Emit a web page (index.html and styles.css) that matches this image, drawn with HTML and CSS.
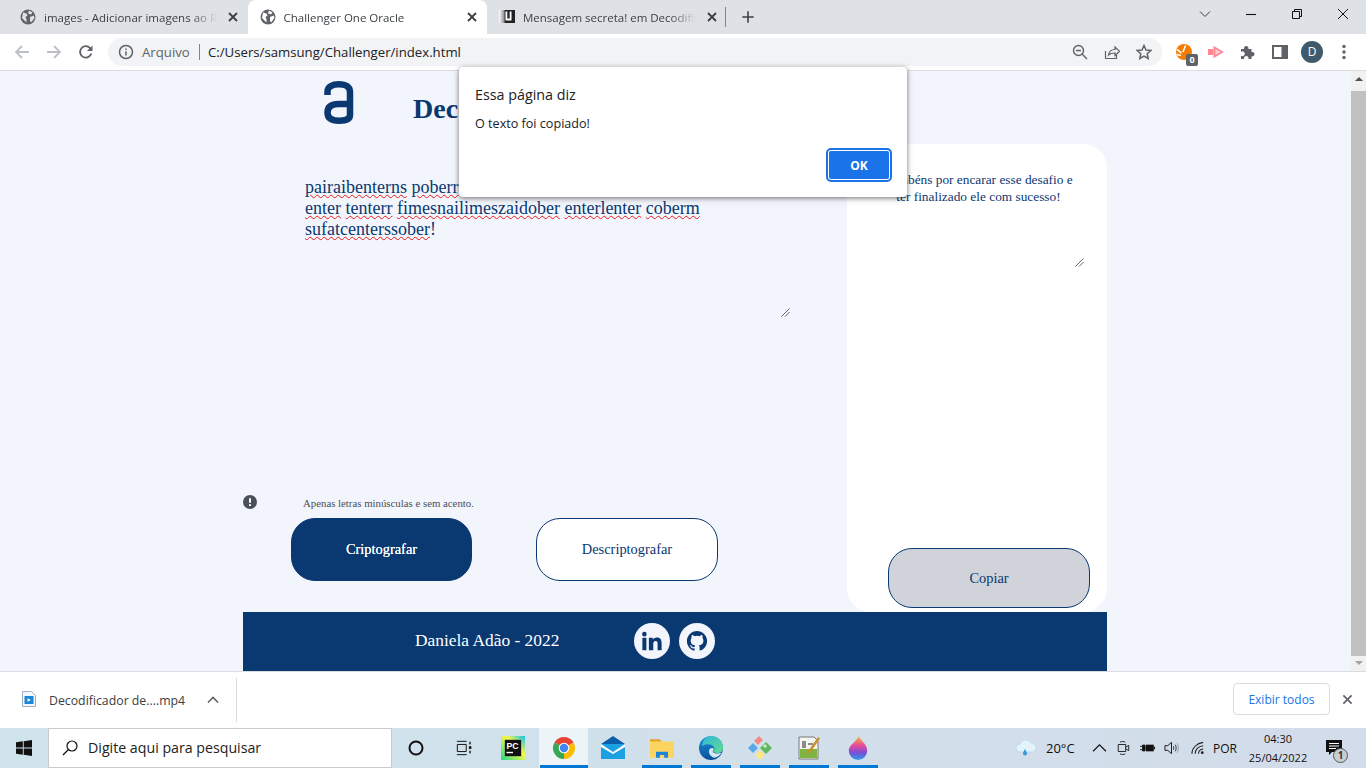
FILE: index.html
```html
<!DOCTYPE html>
<html lang="pt-BR">
<head>
<meta charset="utf-8">
<title>Challenger One Oracle</title>
<link rel="stylesheet" href="styles.css">
</head>
<body>
<div class="tabstrip">
  <div class="tab">
    <svg class="favicon" viewBox="0 0 16 16"><circle cx="8" cy="8" r="7.500" fill="#5f6368"/><path d="M3 3.500l3.500 1 1 2-2 1.500 1 2.500v3L2 9zM9 1.500l3.500 2-1.500 2-3-1zM10 8l3.800-1.500.7 2.500-3 4-1.500-.5z" fill="#dee1e6"/></svg>
    <span class="tab-title">images - Adicionar imagens ao README</span>
    <svg class="tab-close" viewBox="0 0 16 16"><path d="M4 4l8 8M12 4l-8 8" stroke="#3c4043" stroke-width="1.800"/></svg>
  </div>
  <div class="tab tab-active">
    <svg class="favicon" viewBox="0 0 16 16"><circle cx="8" cy="8" r="7.500" fill="#5f6368"/><path d="M3 3.500l3.500 1 1 2-2 1.500 1 2.500v3L2 9zM9 1.500l3.500 2-1.500 2-3-1zM10 8l3.800-1.500.7 2.500-3 4-1.500-.5z" fill="#fff"/></svg>
    <span class="tab-title">Challenger One Oracle</span>
    <svg class="tab-close" viewBox="0 0 16 16"><path d="M4 4l8 8M12 4l-8 8" stroke="#3c4043" stroke-width="1.800"/></svg>
  </div>
  <div class="tab">
    <svg class="favicon" viewBox="0 0 16 16"><defs><linearGradient id="al" x1="0" y1="0" x2="1" y2="0"><stop offset="0" stop-color="#fff"/><stop offset=".3" stop-color="#999"/><stop offset=".4" stop-color="#222"/></linearGradient></defs><rect x="0" y="1" width="16" height="13" fill="url(#al)"/><path d="M6.500 2.500h1.800v7h2.400v-7h1.800v9h-6z" fill="#fff"/></svg>
    <span class="tab-title">Mensagem secreta! em Decodificador</span>
    <svg class="tab-close" viewBox="0 0 16 16"><path d="M4 4l8 8M12 4l-8 8" stroke="#3c4043" stroke-width="1.800"/></svg>
  </div>
  <span class="tab-sep"></span>
  <svg class="new-tab" viewBox="0 0 16 16"><path d="M8 1.500v13M1.500 8h13" stroke="#3c4043" stroke-width="1.800"/></svg>
  <div class="win-controls">
    <span class="win-btn"><svg viewBox="0 0 12 12"><path d="M1 3.500L6 8.500l5-5" fill="none" stroke="#3c4043"/></svg></span>
    <span class="win-btn"><svg viewBox="0 0 12 12"><path d="M1 6.500h10" stroke="#111" stroke-width="1.100"/></svg></span>
    <span class="win-btn"><svg viewBox="0 0 12 12"><path d="M1.500 3.500h7v7h-7zM3.500 3.500v-2h7v7h-2" fill="none" stroke="#111"/></svg></span>
    <span class="win-btn"><svg viewBox="0 0 12 12"><path d="M1 1l10 10M11 1L1 11" stroke="#111"/></svg></span>
  </div>
</div>

<div class="toolbar">
  <span class="tool"><svg viewBox="0 0 16 16"><path d="M15 8H2M8 2L2 8l6 6" fill="none" stroke="#bdc1c6" stroke-width="1.800"/></svg></span>
  <span class="tool"><svg viewBox="0 0 16 16"><path d="M1 8h13M8 2l6 6-6 6" fill="none" stroke="#bdc1c6" stroke-width="1.800"/></svg></span>
  <span class="tool"><svg viewBox="0 0 16 16"><path d="M13.300 9.500A5.700 5.700 0 1 1 12 4l1.500 1.500" fill="none" stroke="#5f6368" stroke-width="1.800"/><path d="M14.500 1.500v5.500H9z" fill="#5f6368"/></svg></span>
  <div class="omnibox">
    <svg class="omni-info" viewBox="0 0 16 16"><circle cx="8" cy="8" r="6.500" fill="none" stroke="#5f6368" stroke-width="1.500"/><path d="M8 7.200v4.300M8 4.500v1.600" stroke="#5f6368" stroke-width="1.500"/></svg>
    <span class="omni-scheme">Arquivo</span>
    <span class="omni-sep"></span>
    <span class="omni-url">C:/Users/samsung/Challenger/index.html</span>
    <div class="omni-actions">
      <span class="tool"><svg viewBox="0 0 16 16"><circle cx="6.500" cy="6.500" r="5" fill="none" stroke="#5f6368" stroke-width="1.400"/><path d="M10.300 10.300L15 15M4 6.500h5" stroke="#5f6368" stroke-width="1.400"/></svg></span>
      <span class="tool"><svg viewBox="0 0 16 16"><path d="M1.500 7v7.500h11V11" fill="none" stroke="#5f6368" stroke-width="1.200"/><path d="M4.500 11c.5-3.500 3-5.500 6.500-5.500V3l4.500 4.300L11 11.500V9C8.500 9 6 9.500 4.500 11z" fill="none" stroke="#5f6368" stroke-width="1.200"/></svg></span>
      <span class="tool"><svg viewBox="0 0 16 16"><path d="M8 1.500l2 4.500 4.800.5-3.600 3.200 1 4.800L8 12.100l-4.200 2.400 1-4.800L1.200 6.500 6 6z" fill="none" stroke="#5f6368" stroke-width="1.500"/></svg></span>
    </div>
  </div>
  <div class="extensions">
    <span class="tool ext-badged">
      <svg viewBox="0 0 16 16"><circle cx="8" cy="8" r="8" fill="#f57c00"/><path d="M7 8L9.500 1.500M5.500 9L1 5.500M5 11.500L.8 10.500" stroke="#fff" stroke-width="1.600"/></svg>
      <span class="ext-count">0</span>
    </span>
    <span class="tool"><svg viewBox="0 0 16 16"><path d="M6.500 3.500L14 8l-7.500 4.500z" fill="#ffd5da" stroke="#ff8a95" stroke-width="2"/><rect x="0" y="5" width="5.500" height="6" fill="#ff8a95"/></svg></span>
    <span class="tool"><svg viewBox="0 0 16 16"><path d="M1 5h3a2.300 2.300 0 1 1 4.400 0h3.100v3a2.300 2.300 0 1 1 0 4.400V15H8.500a2.300 2.300 0 1 0-4.400 0H1v-3.500a2.300 2.300 0 1 0 0-3.500z" fill="#5f6368"/></svg></span>
    <span class="tool"><svg viewBox="0 0 16 16"><path d="M1 2h14v12H1z" fill="#fff" stroke="#5f6368" stroke-width="2"/><rect x="9.500" y="2" width="5" height="12" fill="#5f6368"/></svg></span>
    <span class="tool"><span class="avatar">D</span></span>
    <span class="tool"><svg viewBox="0 0 16 16"><circle cx="8" cy="2.500" r="1.700" fill="#5f6368"/><circle cx="8" cy="8" r="1.700" fill="#5f6368"/><circle cx="8" cy="13.500" r="1.700" fill="#5f6368"/></svg></span>
  </div>
</div>

<div class="viewport">
  <div class="page">
    <div class="app">
      <div class="columns">
        <div class="col-left">
          <header class="brand">
            <svg class="logo" viewBox="0 0 30 43"><path d="M3.500 14V10.500C3.500 6 8 3.300 15 3.300S26 6 26 11V34c0 4-3.500 5.700-11 5.700S3.500 37 3.500 31.500 7 23 15 23h11" fill="none" stroke="#0a3871" stroke-width="6.500"/></svg>
            <h1 class="brand-name">Decodificador</h1>
          </header>
          <div class="input-area">
            <p class="input-line"><span class="typo">pairaibenterns</span> <span class="typo">poberr</span></p>
            <p class="input-line"><span class="typo">enter</span> <span class="typo">tenterr</span> <span class="typo">fimesnailimeszaidober</span> <span class="typo">enterlenter</span> <span class="typo">coberm</span></p>
            <p class="input-line"><span class="typo">sufatcenterssober</span>!</p>
            <svg class="grip grip-left" viewBox="0 0 10 10"><path d="M9.500.5l-9 9M9.500 4.500l-5 5" stroke="#444" stroke-width=".9"/></svg>
          </div>
          <div class="note">
            <svg class="note-icon" viewBox="0 0 14 14"><circle cx="7" cy="7" r="7" fill="#495057"/><path d="M7 3.200v4.600M7 9.300v1.600" stroke="#fff" stroke-width="2"/></svg>
            <span class="note-text">Apenas letras minúsculas e sem acento.</span>
          </div>
          <div class="actions">
            <button class="btn btn-primary">Criptografar</button>
            <button class="btn btn-outline">Descriptografar</button>
          </div>
        </div>
        <aside class="result">
          <div class="result-text">
            <p class="result-line">Parabéns por encarar esse desafio e </p>
            <p class="result-line">ter finalizado ele com sucesso!</p>
            <svg class="grip grip-right" viewBox="0 0 10 10"><path d="M9.500.5l-9 9M9.500 4.500l-5 5" stroke="#444" stroke-width=".9"/></svg>
          </div>
          <button class="btn btn-copy">Copiar</button>
        </aside>
      </div>
      <footer class="site-footer">
        <span class="credit">Daniela Adão - 2022</span>
        <span class="social"><svg viewBox="0 0 24 24"><path d="M1.500 8.500h4.400V22H1.500zM3.700 2a2.500 2.500 0 1 1 0 5 2.500 2.500 0 0 1 0-5zM8.600 8.500h4.200v1.900c.7-1.200 2.200-2.300 4.400-2.300 4.500 0 5.300 2.900 5.300 6.700V22h-4.400v-6.300c0-1.600 0-3.600-2.200-3.600s-2.500 1.700-2.500 3.500V22H8.600z" fill="#0a3871"/></svg></span>
        <span class="social"><svg viewBox="0 0 24 24"><path d="M12 1C5.900 1 1 5.900 1 12c0 4.900 3.200 9 7.500 10.500.6.100.8-.2.800-.5v-2c-3.100.7-3.700-1.300-3.700-1.300-.5-1.300-1.200-1.600-1.200-1.600-1-.7.100-.7.100-.7 1.100.1 1.700 1.100 1.700 1.100 1 1.700 2.600 1.200 3.200.9.100-.7.400-1.200.7-1.500-2.400-.3-5-1.200-5-5.400 0-1.200.4-2.200 1.100-3-.1-.3-.5-1.400.1-2.900 0 0 .9-.3 3 1.100a10.500 10.500 0 0 1 5.500 0c2.100-1.400 3-1.100 3-1.100.6 1.500.2 2.600.1 2.900.7.800 1.100 1.800 1.100 3 0 4.200-2.600 5.100-5 5.400.4.300.8 1 .8 2v3c0 .3.200.6.800.5C19.800 21 23 16.900 23 12 23 5.900 18.100 1 12 1z" fill="#0a3871"/></svg></span>
      </footer>
    </div>
  </div>
  <div class="scrollbar">
    <span class="arrow-up"></span>
    <span class="thumb"></span>
    <span class="arrow-down"></span>
  </div>
</div>

<div class="downloads">
  <svg class="file-icon" viewBox="0 0 14 16"><path d="M.5.500h9l4 4v11H.5z" fill="#f3f6fa" stroke="#9fb0c0"/><rect x="2.500" y="5" width="9" height="8" fill="#1b86d8"/><path d="M5.500 7.200v3.600L9 9z" fill="#fff"/></svg>
  <span class="file-name">Decodificador de....mp4</span>
  <svg class="file-chevron" viewBox="0 0 12 8"><path d="M1 6.500l5-5 5 5" fill="none" stroke="#5f6368" stroke-width="1.600"/></svg>
  <span class="dl-sep"></span>
  <button class="show-all">Exibir todos</button>
  <svg class="dl-close" viewBox="0 0 12 12"><path d="M1.500 1.500l9 9M10.500 1.500l-9 9" stroke="#5f6368" stroke-width="1.800"/></svg>
</div>

<div class="taskbar">
  <svg class="start" viewBox="0 0 16 16"><path d="M0 2.300L6.800 1.300V7.600H0zM7.700 1.200L16 0V7.600H7.700zM0 8.400H6.800V14.700L0 13.700zM7.700 8.400H16V16L7.700 14.800z" fill="#111"/></svg>
  <div class="search">
    <svg class="search-icon" viewBox="0 0 16 16"><circle cx="10" cy="6" r="5" fill="none" stroke="#111" stroke-width="1.200"/><path d="M6.500 9.500L1 15" stroke="#111" stroke-width="1.300"/></svg>
    <span>Digite aqui para pesquisar</span>
  </div>
  <div class="apps">
    <span class="app-cell app-cortana"><svg viewBox="0 0 16 16"><circle cx="8" cy="8" r="6.500" fill="none" stroke="#111" stroke-width="2"/></svg></span>
    <span class="app-cell app-view"><svg viewBox="0 0 18 16"><path d="M1 .5h11M1 15.500h11M1.500 4h10v8h-10z" fill="none" stroke="#111" stroke-width="1.100"/><rect x="15" y="1" width="1.500" height="3" fill="#111"/><rect x="14.500" y="6" width="2.800" height="3" fill="#111"/><rect x="15" y="11" width="1.500" height="3" fill="#111"/></svg></span>
    <span class="app-cell app-pc"><svg class="app-lg" viewBox="0 0 22 22"><defs><linearGradient id="pc" x1="0" y1="1" x2="1" y2="0"><stop offset="0" stop-color="#21d789"/><stop offset=".6" stop-color="#fcf84a"/><stop offset="1" stop-color="#07c3f2"/></linearGradient></defs><rect width="22" height="22" fill="url(#pc)"/><rect x="3.500" y="3.500" width="15" height="15" fill="#111"/><text x="5" y="11.500" class="pc-text">PC</text><rect x="5" y="14.500" width="6" height="1.300" fill="#fff"/></svg></span>
    <span class="app-cell app-current"><svg class="app-lg" viewBox="0 0 24 24"><path d="M12 12L2.470 6.500A11 11 0 0 1 21.530 6.500Z" fill="#ea4335"/><path d="M12 12L21.530 6.500A11 11 0 0 1 12 23Z" fill="#fbbc04"/><path d="M12 12L12 23A11 11 0 0 1 2.470 6.500Z" fill="#34a853"/><circle cx="12" cy="12" r="5.300" fill="#fff"/><circle cx="12" cy="12" r="4.200" fill="#4285f4"/></svg></span>
    <span class="app-cell app-mail"><svg class="app-lg" viewBox="0 0 24 24"><path d="M0 8L12 0l12 8v2H0z" fill="#0c5ea8"/><rect y="8" width="24" height="15" fill="#1ba1e2"/><path d="M0 8l12 8 12-8v3l-12 7-12-7z" fill="#fff"/></svg></span>
    <span class="app-cell"><svg class="app-lg" viewBox="0 0 22 22"><path d="M0 3h9l2 2.500H0z" fill="#e2a320"/><rect y="5" width="22" height="15" fill="#fcd462"/><path d="M5.500 20v-5.500h11V20h-3.500v-2.500H9V20z" fill="#1b86d8"/></svg></span>
    <span class="app-cell"><svg class="app-lg" viewBox="0 0 24 24"><defs><linearGradient id="ed" x1="0" y1="0" x2="0" y2="1"><stop offset="0" stop-color="#1b8fdc"/><stop offset="1" stop-color="#0b4f99"/></linearGradient><linearGradient id="edg" x1="0" y1="0" x2="1" y2="1"><stop offset="0" stop-color="#2fb8d8"/><stop offset="1" stop-color="#62dc8f"/></linearGradient></defs><circle cx="12" cy="12" r="12" fill="url(#ed)"/><path d="M10 .2C18 -.8 24 5 24 12c0 3-2.500 5-5.500 5-2 0-4-.6-4.500-1.500 1.500-1 2-3 .5-5C12.500 8 7 7.500 3 10 3.500 5 6 1 10 .2z" fill="url(#edg)"/><path d="M10 15c.3-2.300 2-3.500 4-3 1 1.500.6 3-.5 3.800 1.500 1.800 5 2.500 9 1-1.500 2.500-4 4.500-7 5-3.500-.8-5.800-3.800-5.500-6.800z" fill="#d5e8f2"/></svg></span>
    <span class="app-cell"><svg class="app-lg" viewBox="0 0 24 24"><path d="M5 7l5 5-5 5-5-5z" fill="#5ba7e8"/><path d="M11 0l4 4-5 5-4-4z" fill="#f28b82"/><path d="M18 6l6 6-6 6-6-6z" fill="#5fb760"/><path d="M17 8l2 2-2 2-2-2z" fill="#d7ecd7"/><path d="M12 14l5 5-5 5-5-5z" fill="#fde68a"/></svg></span>
    <span class="app-cell"><svg class="app-lg" viewBox="0 0 22 24"><path d="M1 1h15l4 4v18H1z" fill="#f4f4f0" stroke="#777"/><rect x="2" y="13" width="17" height="9" fill="#7fb342"/><path d="M5 5v7M7 5v7M10 8h5" stroke="#222"/><path d="M20 1l2 1.500L12 17l-2.500 1 .5-2.800z" fill="#c9902c"/></svg></span>
    <span class="app-cell"><svg class="app-lg" viewBox="0 0 20 26"><defs><linearGradient id="dr" x1="0" y1="0" x2="0" y2="1"><stop offset="0" stop-color="#f7b733"/><stop offset=".4" stop-color="#e84a9b"/><stop offset=".7" stop-color="#7a4fd6"/><stop offset="1" stop-color="#2a9fe8"/></linearGradient></defs><path d="M11 0c0 4 9 8 9 16a10 10 0 0 1-20 0C0 9 8 7 11 0z" fill="url(#dr)"/></svg></span>
  </div>
  <div class="tray">
    <svg class="tray-cloud" viewBox="0 0 22 18"><path d="M5 13a4 4 0 0 1 0-8 6 6 0 0 1 11-1 4.500 4.500 0 0 1 1 9z" fill="#e3f3fc" stroke="#a9d4ee" stroke-width=".6"/><path d="M10 10c1 2 2 3 2 4.500a2 2 0 0 1-4 0c0-1.500 1-2.500 2-4.500z" fill="#3d9ad6"/></svg>
    <span class="tray-temp">20°C</span>
    <span class="tray-cell"><svg viewBox="0 0 14 10"><path d="M1 8l6-6 6 6" fill="none" stroke="#111" stroke-width="1.100"/></svg></span>
    <span class="tray-cell"><svg viewBox="0 0 14 16"><path d="M3 1.200c2-.8 4-.8 6 0M3 14.800c2 .8 4 .8 6 0M9.500 10.500V12H1V4h8.500v6.500zM9.500 7L13 5v6l-3.500-2" fill="none" stroke="#111"/></svg></span>
    <span class="tray-cell"><svg viewBox="0 0 18 12"><path d="M0 4h3M0 8h3M3 2.500h3v7H3zM6 6h1" stroke="#111" fill="#111"/><rect x="7" y="2" width="9.500" height="8" fill="#111"/><rect x="16.500" y="4.500" width="1.500" height="3" fill="#111"/></svg></span>
    <span class="tray-cell"><svg viewBox="0 0 16 14"><path d="M1 4.500h3L8 1v12L4 9.500H1z" fill="none" stroke="#111"/><path d="M10 5c.7 1.300.7 2.700 0 4M12 3.500c1.300 2 1.300 5 0 7" fill="none" stroke="#333"/><path d="M14 2c1.800 3 1.800 7 0 10" fill="none" stroke="#999"/></svg></span>
    <span class="tray-cell tray-wifi"><svg viewBox="0 0 16 14"><path d="M1 13C1 7 6 2 13 1M4.500 13c0-4 3-8 8.500-8.500M8 13c0-2 1.500-4.500 5-5" fill="none" stroke="#222" stroke-width="1.100"/><circle cx="12" cy="12" r="1.500" fill="#222"/></svg></span>
    <span class="tray-lang">POR</span>
    <div class="clock"><span>04:30</span><span>25/04/2022</span></div>
    <span class="notify">
      <svg viewBox="0 0 16 16"><path d="M0 0h16v12H6l-3 3v-3H0z" fill="#111"/><path d="M3 3.500h10M3 6h10M3 8.500h7" stroke="#fff" stroke-width="1"/></svg>
      <span class="notify-count">1</span>
    </span>
  </div>
</div>

<div class="dialog" role="alertdialog">
  <p class="dialog-title">Essa página diz</p>
  <p class="dialog-msg">O texto foi copiado!</p>
  <div class="dialog-actions"><button class="dialog-ok">OK</button></div>
</div>
</body>
</html>
```
FILE: styles.css
```css
* { box-sizing: border-box; }
html, body { margin: 0; height: 100%; overflow: hidden; }
body {
  width: 1366px;
  height: 768px;
  display: flex;
  flex-direction: column;
  font-family: "Open Sans", "Noto Sans", sans-serif;
  position: relative;
}
p, h1 { margin: 0; }
button { font: inherit; cursor: pointer; }
svg { display: block; }

/* Tab strip */
.tabstrip {
  height: 34px;
  background: #dee1e6;
  display: flex;
  align-items: stretch;
  padding-left: 8px;
  flex: none;
}
.tab {
  width: 239.5px;
  display: flex;
  align-items: center;
  padding: 0 7px 0 12px;
  gap: 8px;
  font-size: 11.5px;
  color: #3c4043;
  border-radius: 8px 8px 0 0;
}
.tab-active { background: #fff; color: #3c4043; }
.favicon { width: 16px; height: 16px; flex: none; }
.tab-title {
  flex: 1;
  min-width: 0;
  overflow: hidden;
  white-space: nowrap;
  -webkit-mask-image: linear-gradient(to right, #000 85%, transparent 100%);
  mask-image: linear-gradient(to right, #000 85%, transparent 100%);
}
.tab-close { width: 16px; height: 16px; flex: none; }
.tab-sep { width: 1px; height: 20px; background: #80868b; align-self: center; margin-right: 15px; margin-left: -2px; }
.new-tab { width: 14px; height: 14px; align-self: center; }
.win-controls { margin-left: auto; display: flex; }
.win-btn { width: 46px; display: flex; align-items: center; justify-content: center; padding-bottom: 6px; }
.win-btn svg { width: 12px; height: 12px; }

/* Toolbar */
.toolbar {
  height: 37px;
  background: #fff;
  border-bottom: 1px solid #dadce0;
  display: flex;
  align-items: flex-start;
  padding: 4px 6px 0;
  flex: none;
}
.tool { width: 32px; height: 28px; display: flex; align-items: center; justify-content: center; flex: none; position: relative; }
.tool svg { width: 16px; height: 16px; }
.omnibox {
  flex: 1;
  height: 28px;
  margin-left: 6px;
  margin-right: 6px;
  background: #f1f3f4;
  border-radius: 14px;
  display: flex;
  align-items: center;
  padding: 0 2px 0 10px;
  font-size: 13.2px;
}
.omni-info { width: 16px; height: 16px; margin-right: 8px; }
.omni-scheme { color: #5f6368; width: 57px; flex: none; }
.omni-sep { width: 1px; height: 16px; background: #80868b; margin-right: 8px; flex: none; }
.omni-url { color: #202124; }
.omni-actions { margin-left: auto; display: flex; }
.extensions { display: flex; }
.ext-count {
  position: absolute;
  left: 18px;
  top: 16px;
  width: 12px;
  height: 12px;
  border-radius: 2px;
  background: #5f6368;
  color: #fff;
  font-size: 9px;
  font-weight: 700;
  line-height: 12px;
  text-align: center;
}
.avatar {
  width: 22px;
  height: 22px;
  border-radius: 50%;
  background: #3f5a6b;
  color: #fff;
  font-size: 12px;
  text-align: center;
  line-height: 22px;
}

/* Page */
.viewport { flex: 1; min-height: 0; display: flex; background: #f3f5fc; }
.page { flex: 1; min-width: 0; padding-left: 243px; }
.app {
  width: 864px;
  height: 600px;
  display: flex;
  flex-direction: column;
  font-family: "Liberation Serif", "Times New Roman", serif;
  color: #0a3871;
}
.columns { flex: 1; min-height: 0; display: flex; }
.col-left { width: 604px; display: flex; flex-direction: column; }
.brand { height: 105.5px; display: flex; align-items: flex-start; padding: 10px 0 0 81px; }
.logo { width: 30px; height: 43px; }
.brand-name {
  margin-left: 59px;
  margin-top: 8px;
  font-size: 28px;
  font-weight: 700;
  line-height: 40px;
  white-space: nowrap;
}
.input-area {
  position: relative;
  height: 140px;
  width: 485px;
  margin-left: 62px;
  font-size: 18px;
  line-height: 21px;
}
.input-line { white-space: nowrap; }
.typo { text-decoration: underline wavy #e5191a 1px; text-underline-offset: 1px; }
.grip { position: absolute; width: 9px; height: 9px; }
.grip-left { right: 0; bottom: 0; }
.note {
  margin-top: 178px;
  height: 15px;
  display: flex;
  align-items: center;
}
.note-icon { width: 14px; height: 14px; flex: none; }
.note-text { margin-left: 46px; padding-top: 2px; font-size: 10.8px; color: #495057; white-space: nowrap; }
.actions { margin-top: 8px; padding-left: 48px; display: flex; gap: 64px; }
.btn { border: 1px solid #0a3871; border-radius: 24px; font-family: inherit; font-size: 14.4px; color: #0a3871; }
.btn-primary { width: 181px; height: 63px; background: #0a3871; color: #fff; text-shadow: 0 0 .4px #fff; }
.btn-outline { width: 182px; height: 63px; background: #fff; }
.result {
  width: 260px;
  height: 468px;
  margin-top: 73px;
  background: #fff;
  border-radius: 24px;
  display: flex;
  flex-direction: column;
  padding: 27px 17px 4px 20px;
}
.result-text {
  position: relative;
  height: 96px;
  font-size: 13.33px;
  line-height: 17px;
  text-align: center;
  white-space: nowrap;
}
.grip-right { right: 6px; bottom: 0; }
.btn-copy { width: 202px; height: 60px; margin-top: auto; margin-left: 21px; background: #d0d3d9; }
.site-footer {
  height: 59px;
  background: #0a3871;
  display: flex;
  align-items: center;
  padding: 0 0 2px 172px;
  flex: none;
  margin-top: 1px;
}
.credit { font-size: 17.4px; color: #fff; width: 219px; flex: none; }
.social {
  width: 36px;
  height: 36px;
  border-radius: 50%;
  background: #f3f5fc;
  display: flex;
  align-items: center;
  justify-content: center;
  margin-right: 9px;
}
.social svg { width: 22px; height: 22px; }
.scrollbar { width: 15px; background: #f1f1f1; display: flex; flex-direction: column; align-items: center; flex: none; }
.arrow-up, .arrow-down { width: 0; height: 0; border-left: 4px solid transparent; border-right: 4px solid transparent; flex: none; }
.arrow-up { border-bottom: 4px solid #505050; margin: 6px 0 10px; }
.arrow-down { border-top: 4px solid #a3a3a3; margin: 5px 0 0; }
.thumb { width: 15px; height: 565px; background: #c1c1c1; flex: none; }

/* Downloads bar */
.downloads {
  height: 57px;
  background: #fff;
  border-top: 1px solid #dadce0;
  display: flex;
  align-items: center;
  padding: 0 13px 0 22px;
  flex: none;
}
.file-icon { width: 14px; height: 16px; margin-bottom: 3px; flex: none; }
.file-name { margin-left: 13px; font-size: 12.3px; color: #3c4043; width: 136px; white-space: nowrap; flex: none; }
.file-chevron { width: 12px; height: 8px; margin-left: 22px; flex: none; }
.dl-sep { width: 1px; height: 44px; background: #dadce0; margin-left: 17px; flex: none; }
.show-all {
  margin-left: auto;
  margin-bottom: 2px;
  width: 97px;
  height: 32px;
  background: #fff;
  border: 1px solid #dadce0;
  border-radius: 4px;
  font-size: 12px;
  color: #1a73e8;
  font-family: inherit;
  padding: 0;
}
.dl-close { width: 11px; height: 11px; margin-left: 12px; margin-bottom: 2px; flex: none; }

/* Taskbar */
.taskbar {
  height: 40px;
  background: linear-gradient(to right, #cfe4ec, #d3dcea);
  display: flex;
  align-items: center;
  flex: none;
  color: #111;
}
.start { width: 16px; height: 16px; margin-left: 16px; flex: none; }
.search {
  width: 344px;
  height: 40px;
  margin-left: 16px;
  background: #fff;
  border: 1px solid #c8ccd0;
  display: flex;
  align-items: center;
  padding: 0 0 1px 13px;
  font-size: 14.2px;
  color: #222;
  flex: none;
}
.search-icon { width: 16px; height: 16px; margin-right: 10px; }
.apps { display: flex; height: 40px; flex: none; }
.app-cell {
  width: 49px;
  height: 40px;
  display: flex;
  align-items: center;
  justify-content: center;
  background: linear-gradient(#0078d4, #0078d4) center bottom / 40px 3px no-repeat;
}
.app-cortana { width: 48px; background: none; }
.app-view { width: 47px; background: none; }
.app-pc { width: 52px; background: none; }
.app-mail { background: none; }
.app-cell svg { width: 16px; height: 16px; }
.app-cell .app-lg { width: 24px; height: 24px; }
.app-current { background: linear-gradient(#0078d4, #0078d4) center bottom / 48px 3px no-repeat, #edf4f8; }
.pc-text { font-family: "Liberation Sans", sans-serif; font-weight: 700; font-size: 8px; fill: #fff; }
.tray { margin-left: auto; display: flex; align-items: center; height: 40px; padding-right: 10px; }
.tray-cloud { width: 22px; height: 18px; flex: none; }
.tray-temp { font-size: 13px; margin-left: 9px; width: 41px; flex: none; }
.tray-cell { width: 24px; display: flex; justify-content: center; align-items: center; flex: none; }
.tray-cell svg { width: 15px; height: 14px; }
.tray-wifi { margin-left: 3px; }
.tray-lang { font-size: 12px; margin-left: 3px; width: 32px; flex: none; }
.clock { width: 66px; display: flex; flex-direction: column; align-items: center; font-size: 11px; line-height: 19px; flex: none; }
.notify { width: 45px; height: 40px; display: flex; align-items: center; justify-content: center; position: relative; flex: none; }
.notify svg { width: 16px; height: 16px; }
.notify-count {
  position: absolute;
  left: 22px;
  top: 20px;
  width: 15px;
  height: 15px;
  border-radius: 50%;
  background: #c9ced4;
  border: 1px solid #555;
  font-size: 10px;
  font-weight: 700;
  line-height: 13px;
  text-align: center;
  color: #333;
}

/* Alert dialog */
.dialog {
  position: absolute;
  left: 459px;
  top: 67px;
  width: 448px;
  height: 130px;
  background: #fff;
  border-radius: 4px;
  box-shadow: 0 1px 4px rgba(0, 0, 0, .45), 0 2px 8px rgba(0, 0, 0, .15);
  padding: 17px 17px 17px 16px;
  display: flex;
  flex-direction: column;
  color: #202124;
}
.dialog-title { font-size: 14.3px; line-height: 21px; }
.dialog-msg { font-size: 12.6px; line-height: 16px; margin-top: 11px; }
.dialog-actions { margin-top: auto; display: flex; justify-content: flex-end; }
.dialog-ok {
  width: 62px;
  height: 30px;
  background: #1a73e8;
  color: #fff;
  font-family: inherit;
  font-size: 12px;
  font-weight: 700;
  border: 1px solid #fff;
  border-radius: 3px;
  outline: 2px solid #1a73e8;
  outline-offset: 0;
  box-shadow: none;
  padding: 0;
}
```
